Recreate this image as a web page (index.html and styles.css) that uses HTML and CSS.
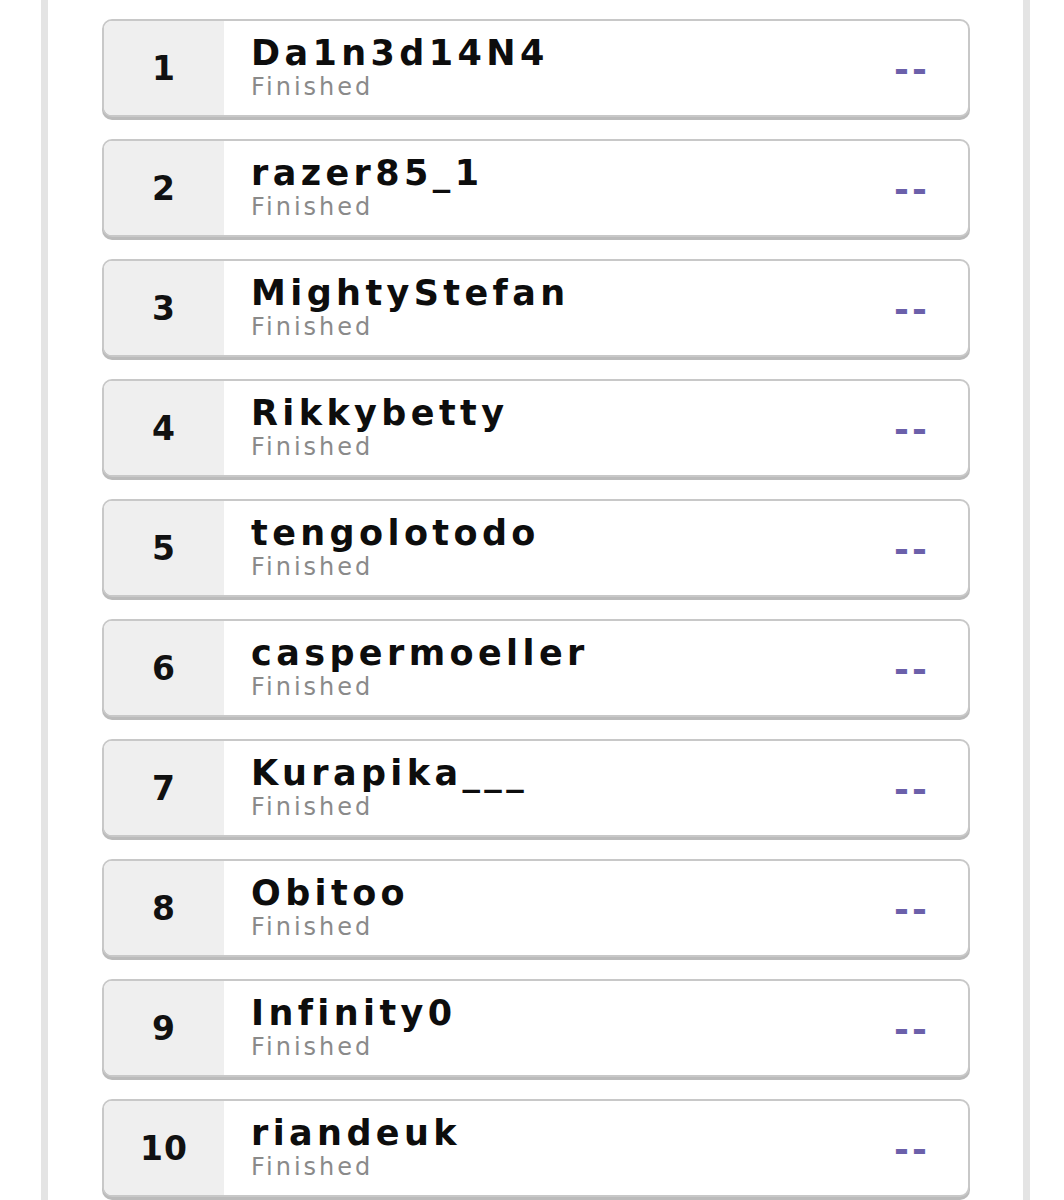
FILE: index.html
```html
<!DOCTYPE html>
<html>
<head>
<meta charset="utf-8">
<link rel="stylesheet" href="styles.css">
</head>
<body>
<div class="frame">
  <div class="list">
    <div class="card"><div class="rank">1</div><div class="info"><div class="name">Da1n3d14N4</div><div class="status">Finished</div></div><div class="score">--</div></div>
    <div class="card"><div class="rank">2</div><div class="info"><div class="name">razer85_1</div><div class="status">Finished</div></div><div class="score">--</div></div>
    <div class="card"><div class="rank">3</div><div class="info"><div class="name">MightyStefan</div><div class="status">Finished</div></div><div class="score">--</div></div>
    <div class="card"><div class="rank">4</div><div class="info"><div class="name">Rikkybetty</div><div class="status">Finished</div></div><div class="score">--</div></div>
    <div class="card"><div class="rank">5</div><div class="info"><div class="name">tengolotodo</div><div class="status">Finished</div></div><div class="score">--</div></div>
    <div class="card"><div class="rank">6</div><div class="info"><div class="name">caspermoeller</div><div class="status">Finished</div></div><div class="score">--</div></div>
    <div class="card"><div class="rank">7</div><div class="info"><div class="name">Kurapika___</div><div class="status">Finished</div></div><div class="score">--</div></div>
    <div class="card"><div class="rank">8</div><div class="info"><div class="name">Obitoo</div><div class="status">Finished</div></div><div class="score">--</div></div>
    <div class="card"><div class="rank">9</div><div class="info"><div class="name">Infinity0</div><div class="status">Finished</div></div><div class="score">--</div></div>
    <div class="card"><div class="rank">10</div><div class="info"><div class="name">riandeuk</div><div class="status">Finished</div></div><div class="score">--</div></div>
  </div>
</div>
</body>
</html>
```

FILE: styles.css
```css
html, body {
  margin: 0;
  padding: 0;
  background: #ffffff;
}
body {
  font-family: "DejaVu Sans", "Liberation Sans", sans-serif;
  color: #111;
  height: 1200px;
  overflow: hidden;
}
.frame {
  margin-left: 41px;
  width: 975px;
  min-height: 1200px;
  border-left: 7px solid #e4e4e4;
  border-right: 7px solid #e4e4e4;
}
.list {
  display: flex;
  flex-direction: column;
  gap: 22px;
  padding: 19px 0 0 54px;
}
.card {
  display: flex;
  align-items: stretch;
  width: 868px;
  height: 98px;
  box-sizing: border-box;
  border: 2px solid #c8c8c8;
  border-radius: 10px;
  box-shadow: 0 3px 0 #bbbbbb;
  background: #fff;
  overflow: hidden;
}
.rank {
  width: 120px;
  flex: none;
  background: #efefef;
  display: flex;
  align-items: center;
  justify-content: center;
  font-weight: 700;
  font-size: 33px;
  letter-spacing: 1px;
  color: #111;
  padding-top: 1px;
}
.info {
  flex: 1;
  padding-left: 27px;
  display: flex;
  flex-direction: column;
  justify-content: center;
}
.name {
  font-weight: 700;
  font-size: 35px;
  line-height: 34px;
  letter-spacing: 4.4px;
  color: #0d0d0d;
  margin-bottom: 4px;
}
.status {
  font-size: 24px;
  line-height: 26px;
  letter-spacing: 3px;
  color: #8a8a8a;
}
.score {
  flex: none;
  display: flex;
  align-items: center;
  margin-right: 38px;
  padding-top: 2px;
  font-weight: 700;
  font-size: 36px;
  letter-spacing: 3px;
  color: #6b60aa;
}
```
